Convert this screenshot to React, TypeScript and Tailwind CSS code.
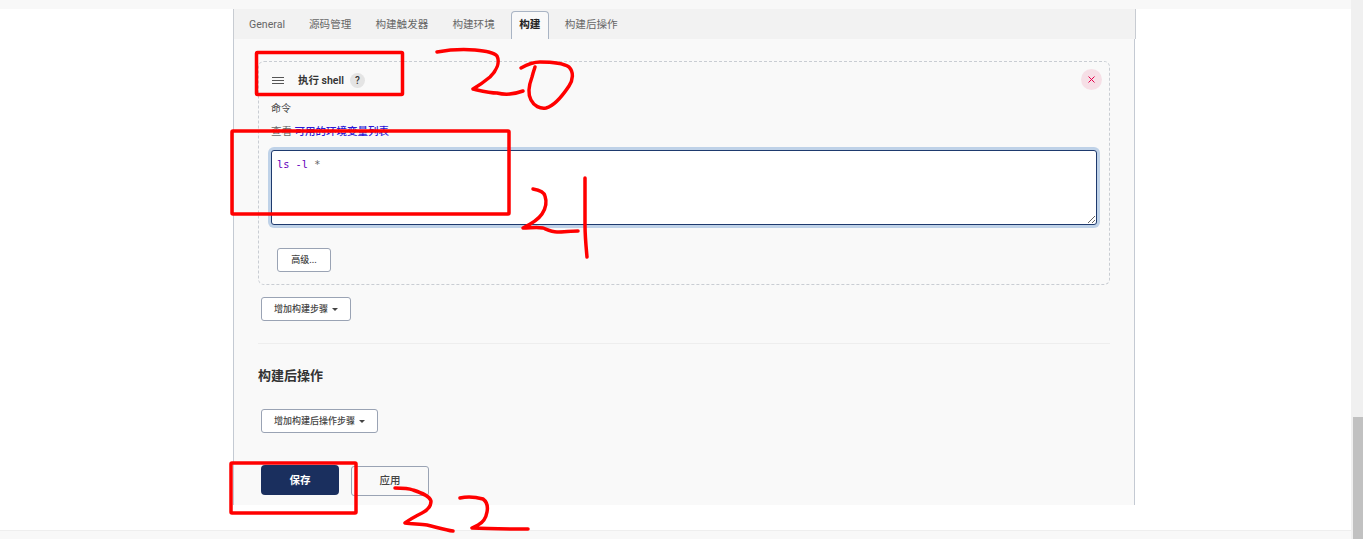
import React from "react";

const cjk = "font-['Roboto','Noto_Sans_CJK_SC',sans-serif]";

function Tab({ label, active }: { label: string; active?: boolean }) {
  if (active) {
    return (
      <div className="flex h-[28px] w-[38px] items-center justify-center self-end rounded-t-[4px] border border-b-0 border-[#a9b4c4] bg-[#f9f9f9] pb-[2px] text-[10.6px] font-bold text-[#222]">
        {label}
      </div>
    );
  }
  return <div className="flex h-[28px] items-center self-end text-[10.6px] text-[#666]">{label}</div>;
}

function OutlineButton({ label, caret, w }: { label: string; caret?: boolean; w: string }) {
  return (
    <button className={`flex h-[24px] ${w} items-center justify-center gap-[4px] rounded-[3px] border border-[#9aa3b4] bg-white pt-[1px] text-[9px] font-medium text-[#444]`}>
      <span>{label}</span>
      {caret && <span className="h-0 w-0 border-x-[3px] border-t-[3px] border-x-transparent border-t-[#444]" />}
    </button>
  );
}

function Annotations() {
  const stroke = { fill: "none", stroke: "#ff0000", strokeLinecap: "round" as const, strokeLinejoin: "round" as const };
  return (
    <svg className="pointer-events-none absolute left-0 top-0" width={1363} height={539}>
      <rect x={256.5} y={52.5} width={146} height={42} rx={1} {...stroke} strokeWidth={3.5} />
      <rect x={232} y={131} width={277} height={83} rx={1} {...stroke} strokeWidth={3.5} />
      <rect x={231} y={463} width={125} height={50} rx={1} {...stroke} strokeWidth={3.5} />
      <path d="M437 52 C448 50 463 49 475 50 C485 51 494 52 497 56 C500 62 497 70 490 77 C484 82 478 86 473 89 C482 91 490 93 497 93 C505 95 515 94 523 91" {...stroke} strokeWidth={3.5} />
      <path d="M521 68 C528 64 534 62 540 62 C552 62 563 63 569 67 C574 72 573 80 569 86 C563 95 554 106 546 108 C540 109 534 106 531 100 C527 93 529 85 532 77 C533 73 534 70 535 67" {...stroke} strokeWidth={3.5} />
      <path d="M533 189 C539 190 544 192 545 196 C547 202 546 208 542 214 C538 220 531 224 523 228 C530 228 537 227 543 228 C548 230 552 232 557 232 C564 232 571 231 578 231" {...stroke} strokeWidth={3.5} />
      <path d="M585 178 L585 225 C585 236 586 246 587 257" {...stroke} strokeWidth={3.5} />
      <path d="M395 488 C402 488 408 488 413 490 C422 493 430 496 431 501 C431 506 428 510 422 513 C416 516 409 520 405 523 C412 524 420 524 427 525 C436 527 445 530 453 531" {...stroke} strokeWidth={3.5} />
      <path d="M460 498 C468 496 476 497 483 499 C487 502 488 507 487 512 C486 518 482 523 478 525 C476 526 474 527 472 528 C490 529 510 529 528 529" {...stroke} strokeWidth={3.5} />
    </svg>
  );
}

export default function App() {
  return (
    <div className={`relative flex h-[539px] w-[1363px] overflow-hidden bg-white ${cjk}`}>
      <div className="flex w-[1351px] flex-col">
        <div className="h-[9px] bg-[#f8f8f8]" />
        <div className="ml-[233px] w-[903px] flex-1">
          <div className="flex h-[30px] items-stretch gap-[24px] border-x border-[#c8ccd2] bg-[#f2f2f2] pl-[15px]">
            <Tab label="General" />
            <Tab label="源码管理" />
            <Tab label="构建触发器" />
            <Tab label="构建环境" />
            <div className="-mx-[8px] flex self-end">
              <Tab label="构建" active />
            </div>
            <Tab label="构建后操作" />
          </div>
          <div className="flex h-[466px] w-[902px] flex-col border-x border-[#c4cad3] bg-[#f9f9f9] pl-[24px] pr-[24px] pt-[22px]">
            <div className="relative h-[224px] w-[852px] rounded-[6px] border border-dashed border-[#c9cdd3] px-[12px]">
              <div className="flex h-[37px] items-center">
                <span className="ml-[1px] flex w-[12px] flex-col gap-[2px]">
                  <span className="block h-px bg-[#555]" />
                  <span className="block h-px bg-[#555]" />
                  <span className="block h-px bg-[#555]" />
                </span>
                <span className="ml-[14px] text-[10.5px] font-semibold text-[#333]">执行 shell</span>
                <span className="ml-[6px] flex h-[15px] w-[15px] items-center justify-center rounded-full bg-[#e4e4e4] text-[10px] font-medium text-[#333]">?</span>
              </div>
              <div className="absolute right-[7px] top-[7px] flex h-[21px] w-[21px] items-center justify-center rounded-full bg-[#f6dfe6]">
                <svg width="7" height="7" viewBox="0 0 7 7">
                  <path d="M0.5 0.5 L6.5 6.5 M6.5 0.5 L0.5 6.5" stroke="#e6004c" strokeWidth="1" />
                </svg>
              </div>
              <div className="mt-[1px] h-[17px] text-[10px] leading-[17px] text-[#444]">命令</div>
              <div className="mt-[6px] h-[17px] text-[10.5px] leading-[17px] text-[#666]">
                查看 <a className="font-medium text-[#2a18d8]">可用的环境变量列表</a>
              </div>
              <div className="mt-[10px] h-[75px] w-[826px] resize overflow-auto rounded-[3px] border border-[#1e3a6e] bg-white px-[5px] py-[6px] font-['DejaVu_Sans_Mono',monospace] text-[10.3px] leading-[14px] shadow-[0_0_0_3px_#bfd2e8]">
                <span className="text-[#6400bb]">ls -l</span> <span className="text-[#666]">*</span>
              </div>
              <div className="ml-[6px] mt-[23px]">
                <OutlineButton label="高级..." w="w-[54px]" />
              </div>
            </div>
            <div className="ml-[3px] mt-[12px]">
              <OutlineButton label="增加构建步骤" caret w="w-[90px]" />
            </div>
            <div className="mt-[22px] h-px w-[852px] bg-[#eeeeee]" />
            <div className="mt-[22px] text-[13px] font-bold leading-[20px] text-[#333]">构建后操作</div>
            <div className="ml-[3px] mt-[23px]">
              <OutlineButton label="增加构建后操作步骤" caret w="w-[117px]" />
            </div>
            <div className="ml-[3px] mt-[32px] flex items-start gap-[12px]">
              <button className="flex h-[30px] w-[78px] items-center justify-center rounded-[4px] bg-[#1a2f5e] pt-[1px] text-[10.5px] font-bold text-white">保存</button>
              <button className="mt-px flex h-[30px] w-[78px] items-center justify-center rounded-[3px] border border-[#9aa3b4] bg-[#f9f9f9] text-[10.5px] font-medium text-[#444]">应用</button>
            </div>
          </div>
        </div>
        <div className="h-[9px] border-t border-[#eeeeee] bg-[#f8f8f8]" />
      </div>
      <div className="flex w-[12px] flex-col border-l border-[#f0f0f0] bg-[#f0f0f0]">
        <div className="h-[417px]" />
        <div className="ml-[1px] flex-1 bg-[#c1c1c1]" />
      </div>
      <Annotations />
    </div>
  );
}
